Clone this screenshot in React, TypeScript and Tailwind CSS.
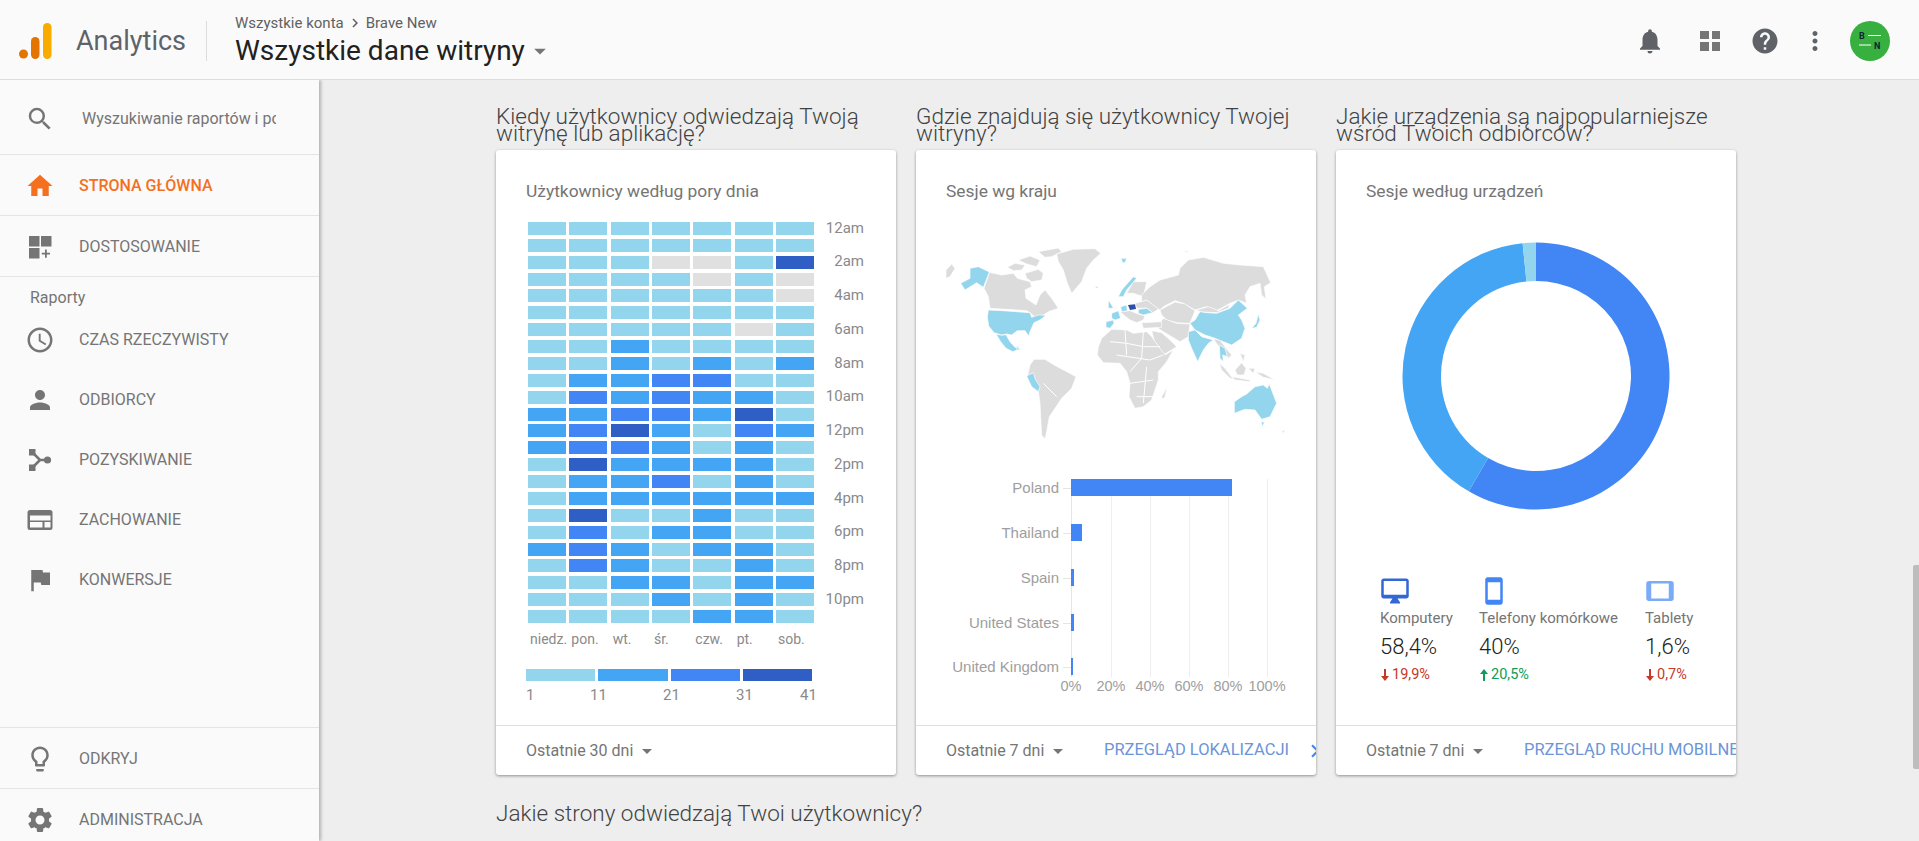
import type { ReactNode } from "react";
import {
  MdAccessTime,
  MdArrowDropDown,
  MdChevronRight,
  MdFlag,
  MdHelp,
  MdHome,
  MdLightbulbOutline,
  MdMoreVert,
  MdNotifications,
  MdPerson,
  MdSearch,
  MdSettings,
  MdSmartphone,
  MdTablet,
} from "react-icons/md";

const HEAT = [
  "0000000",
  "0000000",
  "000gg03",
  "0000g0g",
  "000000g",
  "0000000",
  "00000g0",
  "0010000",
  "0010101",
  "0112200",
  "0212110",
  "1122130",
  "1231021",
  "1221010",
  "0311110",
  "0112010",
  "0111111",
  "0300100",
  "0201100",
  "1210110",
  "0210010",
  "0011011",
  "0001010",
  "0000110",
];

const HEAT_COLORS: Record<string, string> = {
  "0": "bg-[#93d5ed]",
  "1": "bg-[#45a5f5]",
  "2": "bg-[#4285f4]",
  "3": "bg-[#2f5ec4]",
  g: "bg-[#e0e0e0]",
};

const HOURS = ["12am", "2am", "4am", "6am", "8am", "10am", "12pm", "2pm", "4pm", "6pm", "8pm", "10pm"];
const DAYS = ["niedz.", "pon.", "wt.", "śr.", "czw.", "pt.", "sob."];

const GRAY = [
  "178,97 215,105 250,100 262,115 300,125 305,140 285,150 288,175 318,195 330,165 345,150 365,175 385,205 355,215 345,222 320,238 303,220 290,212 180,205 175,170 162,145",
  "232,82 255,70 285,75 275,90 250,92",
  "265,60 300,48 330,60 320,80 290,72",
  "285,100 325,88 340,100 335,120 305,125 290,115",
  "325,35 385,24 395,35 365,50 345,52",
  "380,42 430,28 495,26 512,40 490,60 470,85 455,125 425,160 412,130 400,90 385,65",
  "48,90 65,72 75,85 60,110 48,115",
  "300,375 312,358 345,358 372,375 405,392 438,410 425,445 395,475 375,505 358,530 350,575 345,597 335,585 332,530 330,490 325,455 298,425 292,410",
  "590,160 610,125 650,125 640,170 610,160",
  "570,215 600,212 625,222 645,228 640,240 620,248 600,240 585,228",
  "615,190 650,180 690,205 668,218 650,204 620,205",
  "635,165 660,140 690,120 745,105 750,85 775,60 820,52 880,70 930,75 1000,80 1022,128 1003,140 1008,178 995,165 990,130 960,140 945,165 950,190 925,180 900,190 860,212 830,200 795,210 760,190 735,182 700,200 690,210 650,180 635,185",
  "690,210 735,186 765,192 795,212 780,250 740,248 710,240 695,225",
  "800,210 835,200 865,212 900,192 895,205 860,218 812,216",
  "680,262 700,235 740,250 780,252 775,290 750,305 725,290 700,275",
  "635,248 695,245 695,262 640,265",
  "665,272 695,278 720,300 740,320 700,345 675,310",
  "505,320 515,295 545,268 590,270 610,280 650,275 665,290 690,325 705,345 730,330 710,365 685,395 685,420 665,480 640,500 615,505 597,470 600,430 590,395 570,370 520,368 502,345",
  "695,470 712,440 705,470 698,478",
  "850,297 870,300 885,320 905,345 895,355 870,325",
  "868,370 885,385 910,418 900,415 875,390",
  "905,410 960,420 960,425 915,420",
  "915,390 935,368 948,385 942,405 922,405",
  "955,385 975,385 970,400",
  "975,395 1000,400 1035,420 1000,412",
  "930,340 945,345 940,365",
  "1055,575 1067,568 1060,580",
  "760,30 775,35 770,38",
  "495,138 508,140 498,146",
];

const PALE = [
  "573,55 590,55 585,68 578,68",
  "565,170 575,150 610,110 620,115 590,150 580,170",
  "120,85 145,80 178,96 160,142 140,128 105,150 92,130 120,115",
  "175,210 215,212 300,218 305,232 325,225 348,226 330,240 312,248 300,275 296,288 285,272 262,272 245,285 230,282 215,285 192,278 176,258 172,232",
  "198,282 215,286 228,284 240,305 255,322 268,318 262,330 248,335 228,325 212,305",
  "258,322 275,328 262,330",
  "290,408 310,398 316,418 330,440 325,455 305,440",
  "545,220 565,212 572,235 555,240 545,235",
  "535,180 545,195 550,205 535,205",
  "572,200 590,195 592,212 575,215",
  "625,208 650,205 668,218 640,225 625,220",
  "528,245 550,240 552,250 540,265 528,262",
  "780,250 795,240 810,215 830,218 860,220 900,205 925,180 952,205 925,225 935,240 945,265 935,295 905,315 880,305 855,295 825,285 795,270",
  "775,275 795,270 815,290 850,300 835,310 820,330 803,365 785,325 775,300",
  "868,315 885,325 892,350 878,345 880,365 870,355",
  "985,222 990,240 980,262 965,265 978,250",
  "913,485 935,470 950,462 975,440 1000,435 1012,445 1018,432 1040,490 1020,530 995,538 975,510 945,508 913,520",
  "993,545 1003,547 998,560",
];

const AFRICA_LINES = [
  "540,305 590,310 640,320 690,320",
  "585,270 590,345",
  "640,275 635,355 600,395",
  "560,345 660,360 700,345",
  "600,430 670,420",
  "620,470 670,470",
  "650,380 640,490",
  "340,430 380,470",
];

const BARS = [
  { name: "Poland", y: 19, width: 161 },
  { name: "Thailand", y: 64, width: 11 },
  { name: "Spain", y: 109, width: 3 },
  { name: "United States", y: 154, width: 3 },
  { name: "United Kingdom", y: 198, width: 2 },
];

const TICKS = [
  { label: "0%", x: 155 },
  { label: "20%", x: 195 },
  { label: "40%", x: 234 },
  { label: "60%", x: 273 },
  { label: "80%", x: 312 },
  { label: "100%", x: 351 },
];

function arc(r1: number, r2: number, from: number, to: number) {
  const a1 = (from / 100) * Math.PI * 2 - Math.PI / 2;
  const a2 = (to / 100) * Math.PI * 2 - Math.PI / 2;
  const big = to - from > 50 ? 1 : 0;
  const p = (r: number, a: number) => `${135 + r * Math.cos(a)} ${135 + r * Math.sin(a)}`;
  return `M${p(r1, a1)} A${r1} ${r1} 0 ${big} 1 ${p(r1, a2)} L${p(r2, a2)} A${r2} ${r2} 0 ${big} 0 ${p(r2, a1)} Z`;
}

function CustomizeIcon() {
  return (
    <svg width="30" height="30" viewBox="0 0 30 30" fill="#757575">
      <rect x="4" y="4" width="10.5" height="10.5" />
      <rect x="16" y="4" width="10.5" height="10.5" />
      <rect x="4" y="16" width="10.5" height="10.5" />
      <path d="M20 17.5h1.8v3.2H25v1.8h-3.2v3.2H20v-3.2h-3.2v-1.8H20z" />
    </svg>
  );
}

function AcquisitionIcon() {
  return (
    <svg width="30" height="30" viewBox="0 0 30 30" fill="#757575">
      <path d="M8 8l7 7h8M8 22l7-7" stroke="#757575" strokeWidth="2.6" fill="none" />
      <rect x="4" y="4" width="6.5" height="6.5" />
      <rect x="4" y="19.5" width="6.5" height="6.5" />
      <circle cx="22.5" cy="15" r="3.6" />
    </svg>
  );
}

function BehaviorIcon() {
  return (
    <svg width="30" height="30" viewBox="0 0 30 30">
      <rect x="2.5" y="5" width="25" height="20" rx="2.5" fill="#757575" />
      <rect x="5" y="10.5" width="20.5" height="5" fill="#fafafa" />
      <rect x="5" y="17" width="12.5" height="5.5" fill="#fafafa" />
      <rect x="19.5" y="17" width="6" height="5.5" fill="#fafafa" />
    </svg>
  );
}

function DesktopIcon() {
  return (
    <svg width="30" height="30" viewBox="0 0 24 24" fill="#3367d6">
      <path d="M21 2H3c-1.1 0-2 .9-2 2v12c0 1.1.9 2 2 2h7l-2 3v1h8v-1l-2-3h7c1.1 0 2-.9 2-2V4c0-1.1-.9-2-2-2zm0 13H3V4h18v11z" />
    </svg>
  );
}

function NavItem({ icon, label, active }: { icon: ReactNode; label: string; active?: boolean }) {
  return (
    <div className="h-[60px] flex items-center pl-[25px] pt-[2px] gap-[24px]">
      <span className={active ? "text-[#f4701f]" : "text-[#757575]"}>{icon}</span>
      <span className={`text-[16px] ${active ? "text-[#f4701f] font-medium" : "text-[#757575]"}`}>{label}</span>
    </div>
  );
}

function Sidebar() {
  return (
    <aside className="w-[319px] h-[761px] flex flex-col bg-[#fafafa] shadow-[2px_0_3px_rgba(0,0,0,0.25)] z-10 shrink-0">
      <div className="h-[75px] shrink-0 flex items-center pl-[25px] pt-[3px] gap-[27px] border-b border-[#e4e4e4]">
        <MdSearch size={30} className="text-[#757575]" />
        <div className="w-[194px] overflow-hidden whitespace-nowrap text-[16px] text-[#757575]">
          Wyszukiwanie raportów i pomocy
        </div>
      </div>
      <div className="border-b border-[#e4e4e4]">
        <NavItem active icon={<MdHome size={30} />} label="STRONA GŁÓWNA" />
      </div>
      <div className="border-b border-[#e4e4e4]">
        <NavItem icon={<CustomizeIcon />} label="DOSTOSOWANIE" />
      </div>
      <div className="h-[32px] pl-[30px] pt-[10px] text-[16px] leading-[22px] text-[#757575]">Raporty</div>
      <NavItem icon={<MdAccessTime size={30} />} label="CZAS RZECZYWISTY" />
      <NavItem icon={<MdPerson size={30} />} label="ODBIORCY" />
      <NavItem icon={<AcquisitionIcon />} label="POZYSKIWANIE" />
      <NavItem icon={<BehaviorIcon />} label="ZACHOWANIE" />
      <NavItem icon={<MdFlag size={30} />} label="KONWERSJE" />
      <div className="mt-auto border-t border-[#e4e4e4]">
        <NavItem icon={<MdLightbulbOutline size={30} />} label="ODKRYJ" />
      </div>
      <div className="border-t border-[#e4e4e4] h-[53px]">
        <NavItem icon={<MdSettings size={30} />} label="ADMINISTRACJA" />
      </div>
    </aside>
  );
}

function Header() {
  return (
    <header className="h-[80px] pt-[2px] bg-[#fafafa] border-b border-[#dcdcdc] flex items-center relative z-20">
      <svg width="34" height="38" viewBox="0 0 34 38" className="ml-[18px] shrink-0">
        <circle cx="5.5" cy="32" r="4.5" fill="#e37400" />
        <rect x="13" y="15" width="8.5" height="22" rx="4.2" fill="#e37400" />
        <rect x="25" y="1" width="8.5" height="36" rx="4.2" fill="#f9ab00" />
      </svg>
      <div className="ml-[24px] mt-[2px] text-[27px] text-[#5f6368]">Analytics</div>
      <div className="ml-[20px] w-px h-[40px] bg-[#dcdcdc]" />
      <div className="ml-[28px]">
        <div className="flex items-center text-[15px] leading-[18px] text-[#616161]">
          <span>Wszystkie konta</span>
          <MdChevronRight size={18} className="mx-[2px]" />
          <span>Brave New</span>
        </div>
        <div className="flex items-center mt-[2px]">
          <span className="text-[28px] leading-[34px] text-[#212121]">Wszystkie dane witryny</span>
          <MdArrowDropDown size={28} className="ml-[1px] text-[#757575]" />
        </div>
      </div>
      <div className="ml-auto flex items-center text-[#5f6368]">
        <MdNotifications size={30} />
        <div className="ml-[35px] w-[20px] h-[20px] grid grid-cols-2 gap-[3px]">
          <div className="bg-[#757575]" />
          <div className="bg-[#757575]" />
          <div className="bg-[#757575]" />
          <div className="bg-[#757575]" />
        </div>
        <MdHelp size={30} className="ml-[30px]" />
        <MdMoreVert size={30} className="ml-[20px]" />
        <svg width="40" height="40" viewBox="0 0 40 40" className="ml-[20px] mr-[29px]">
          <circle cx="20" cy="20" r="20" fill="#38b03f" />
          <text x="9" y="18" fontSize="9" fontWeight="700" fontFamily="Roboto" fill="#123">B</text>
          <text x="24" y="28" fontSize="9" fontWeight="700" fontFamily="Roboto" fill="#123">N</text>
          <path d="M18 14.5h13M9 24h12" stroke="#fff" strokeWidth="1" />
        </svg>
      </div>
    </header>
  );
}

function Footer({ range, link, chevron }: { range: string; link?: string; chevron?: boolean }) {
  return (
    <div className="h-[50px] border-t border-[#e0e0e0] flex items-center pl-[30px] overflow-hidden whitespace-nowrap">
      <div className="w-[158px] shrink-0 flex items-center text-[16px] text-[#757575]">
        {range}
        <MdArrowDropDown size={24} className="ml-[2px]" />
      </div>
      {link && <span className="text-[16.5px] text-[#6b95d8]">{link}</span>}
      {chevron && <MdChevronRight size={26} className="ml-[13px] shrink-0 text-[#4285f4]" />}
    </div>
  );
}

function Section({ title, children, footer }: { title: ReactNode; children: ReactNode; footer: ReactNode }) {
  return (
    <section>
      <h2 className="text-[22.5px] leading-[17px] font-light text-[#424242] mb-[8px] h-[34px] w-[420px] relative">{title}</h2>
      <div className="h-[625px] bg-white rounded-[3px] shadow-[0_1px_3px_rgba(0,0,0,0.4)] flex flex-col overflow-hidden">
        <div className="h-[575px] pl-[30px] pt-[29px]">{children}</div>
        {footer}
      </div>
    </section>
  );
}

function CardTitle({ children }: { children: ReactNode }) {
  return <div className="text-[17.4px] leading-[24px] text-[#757575]">{children}</div>;
}

function HeatCard() {
  return (
    <Section
      title={<>Kiedy użytkownicy odwiedzają Twoją<br />witrynę lub aplikację?</>}
      footer={<Footer range="Ostatnie 30 dni" />}
    >
      <CardTitle>Użytkownicy według pory dnia</CardTitle>
      <div className="mt-[19px] ml-[2px] flex">
        <div className="w-[286px] h-[401px] grid grid-cols-7 grid-rows-[repeat(24,1fr)] gap-x-[3.33px] gap-y-[3.87px]">
          {HEAT.flatMap((row, r) =>
            row.split("").map((v, c) => <div key={`${r}-${c}`} className={HEAT_COLORS[v]} />)
          )}
        </div>
        <div className="w-[50px] h-[405px] -mt-[11px] grid grid-rows-12 text-right text-[15px] text-[#8a8a8a]">
          {HOURS.map((h) => (
            <div key={h} className="flex items-center justify-end">{h}</div>
          ))}
        </div>
      </div>
      <div className="mt-[6px] ml-[2px] w-[286px] grid grid-cols-7 gap-x-[3.33px] text-[14px] leading-[20px] text-[#8a8a8a]">
        {DAYS.map((d) => (
          <div key={d} className="pl-[2px] whitespace-nowrap">{d}</div>
        ))}
      </div>
      <div className="mt-[20px] w-[286px] h-[12px] flex gap-[3px]">
        <div className="flex-1 bg-[#93d5ed]" />
        <div className="flex-1 bg-[#45a5f5]" />
        <div className="flex-1 bg-[#4285f4]" />
        <div className="flex-1 bg-[#2f5ec4]" />
      </div>
      <div className="mt-[4px] flex text-[15px] leading-[20px] text-[#8a8a8a]">
        <div className="w-[64px]">1</div>
        <div className="w-[73px]">11</div>
        <div className="w-[73px]">21</div>
        <div className="w-[64px]">31</div>
        <div>41</div>
      </div>
    </Section>
  );
}

function WorldMap() {
  return (
    <svg width="390" height="210" viewBox="0 0 1170 630" className="block">
      <g stroke="#fff" strokeWidth="2" strokeLinejoin="round">
        {GRAY.map((p) => <polygon key={p} points={p} fill="#dcdcdc" />)}
        {PALE.map((p) => <polygon key={p} points={p} fill="#93d5ed" />)}
        <polygon points="594,195 615,193 618,207 600,210" fill="#2c4fa8" stroke="none" />
      </g>
      <g stroke="#fff" strokeWidth="3" fill="none">
        {AFRICA_LINES.map((p) => <polyline key={p} points={p} />)}
      </g>
    </svg>
  );
}

function BarChart() {
  return (
    <svg width="400" height="245" viewBox="0 0 400 245" className="block" fontFamily="Liberation Sans, sans-serif">
      {TICKS.slice(1).map((t) => (
        <rect key={t.x} x={t.x} y={19} width="1" height="198" fill="#eeeeee" />
      ))}
      <rect x="155" y="19" width="1" height="198" fill="#e5e5e5" />
      {BARS.map((b) => (
        <g key={b.name}>
          <rect x="147" y={b.y + 9} width="8" height="1" fill="#e5e5e5" />
          <rect x="155" y={b.y} width={b.width} height="17" fill="#4285f4" />
          <text x="143" y={b.y + 14} textAnchor="end" fontSize="15" fill="#9e9e9e">{b.name}</text>
        </g>
      ))}
      {TICKS.map((t) => (
        <text key={t.label} x={t.x} y="231" textAnchor="middle" fontSize="14.5" fill="#9e9e9e">{t.label}</text>
      ))}
    </svg>
  );
}

function GeoCard() {
  return (
    <Section
      title={<>Gdzie znajdują się użytkownicy Twojej<br />witryny?</>}
      footer={<Footer range="Ostatnie 7 dni" link="PRZEGLĄD LOKALIZACJI" chevron />}
    >
      <CardTitle>Sesje wg kraju</CardTitle>
      <div className="mt-[37px] -ml-[16px]">
        <WorldMap />
      </div>
      <div className="mt-[10px] -ml-[30px]">
        <BarChart />
      </div>
    </Section>
  );
}

function Device({ icon, label, value, delta, up, width }: { icon: ReactNode; label: string; value: string; delta: string; up?: boolean; width: string }) {
  return (
    <div className={`${width} shrink-0`}>
      <div className="h-[30px]">{icon}</div>
      <div className="mt-[2px] text-[15px] leading-[20px] text-[#757575] whitespace-nowrap">{label}</div>
      <div className="mt-[4px] text-[22px] leading-[30px] font-light text-[#212121]">{value}</div>
      <div className={`mt-[3px] flex items-center gap-[3px] pl-[1px] text-[14.5px] leading-[20px] ${up ? "text-[#0f9d58]" : "text-[#c53929]"}`}>
        <svg width="8" height="12" viewBox="0 0 8 12" fill="currentColor">
          <path d={up ? "M4 0l4 5H5v7H3V5H0z" : "M3 0h2v7h3l-4 5-4-5h3z"} />
        </svg>
        {delta}
      </div>
    </div>
  );
}

function DeviceCard() {
  return (
    <Section
      title={<>Jakie urządzenia są najpopularniejsze<br />wśród Twoich odbiorców?</>}
      footer={<Footer range="Ostatnie 7 dni" link="PRZEGLĄD RUCHU MOBILNEGO" />}
    >
      <CardTitle>Sesje według urządzeń</CardTitle>
      <svg width="270" height="270" viewBox="0 0 270 270" className="block mt-[38px] ml-[35px]">
        <path d={arc(133.5, 95, 0, 58.4)} fill="#4285f4" />
        <path d={arc(133.5, 95, 58.4, 98.4)} fill="#45a5f5" />
        <path d={arc(133.5, 95, 98.4, 100)} fill="#93d5ed" />
      </svg>
      <div className="mt-[65px] ml-[14px] flex">
        <Device width="w-[99px]" icon={<DesktopIcon />} label="Komputery" value="58,4%" delta="19,9%" />
        <Device width="w-[166px]" icon={<MdSmartphone size={30} className="text-[#4285f4]" />} label="Telefony komórkowe" value="40%" delta="20,5%" up />
        <Device width="w-[80px]" icon={<MdTablet size={30} className="text-[#7baaf7]" />} label="Tablety" value="1,6%" delta="0,7%" />
      </div>
    </Section>
  );
}

export default function App() {
  return (
    <div className="h-[841px] overflow-hidden bg-[#eeeeee] font-['Roboto',sans-serif] relative">
      <Header />
      <div className="flex">
        <Sidebar />
        <main className="flex-1 pl-[177px] pt-[28px]">
          <div className="flex gap-[20px]">
            <div className="w-[400px]"><HeatCard /></div>
            <div className="w-[400px]"><GeoCard /></div>
            <div className="w-[400px]"><DeviceCard /></div>
          </div>
          <h2 className="mt-[22px] text-[22.5px] leading-[32px] font-light text-[#424242]">Jakie strony odwiedzają Twoi użytkownicy?</h2>
        </main>
      </div>
      <div className="absolute right-0 top-[565px] w-[6px] h-[204px] bg-[#bdbdbd] rounded-l-[2px]" />
    </div>
  );
}
